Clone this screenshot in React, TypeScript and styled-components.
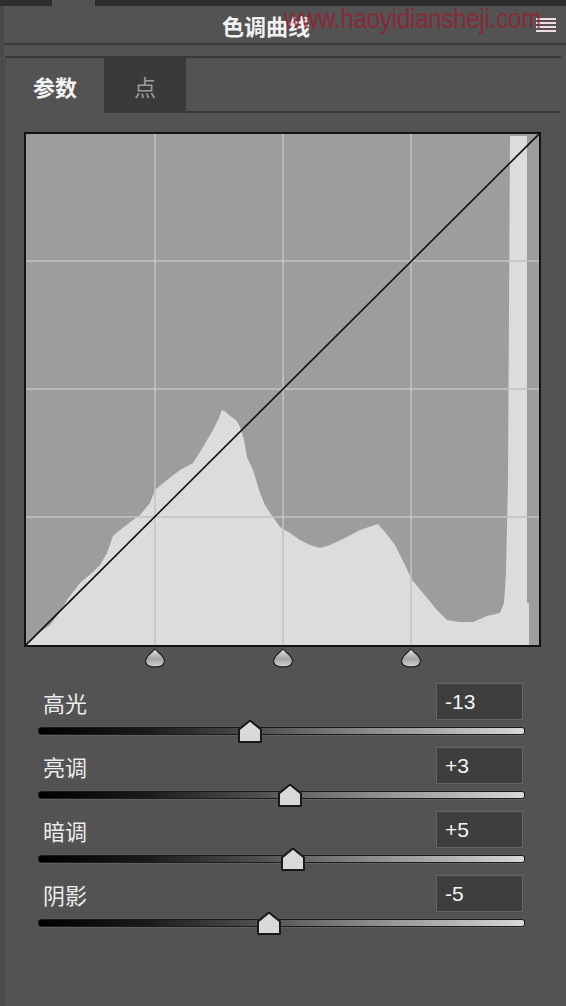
import React from 'react';
import styled, { createGlobalStyle } from 'styled-components';

const GlobalStyle = createGlobalStyle`
  html, body {
    margin: 0;
    padding: 0;
    background: #535353;
  }
  #root {
    width: 566px;
    height: 1006px;
  }
`;

const Panel = styled.div`
  position: relative;
  width: 566px;
  height: 1006px;
  display: flex;
  flex-direction: column;
  background: #535353;
  overflow: hidden;
  font-family: "Noto Sans CJK SC", "Noto Sans", sans-serif;
  color: #ececec;
`;

const TopStrip = styled.div`
  flex: none;
  height: 6px;
  display: flex;
  background: #2e2e2e;
`;

const TopTab = styled.div`
  width: 43px;
  margin-left: 52px;
  background: #525252;
`;

const Body = styled.div`
  flex: 1;
  display: flex;
  flex-direction: column;
  border-left: 4px solid #4a4a4a;
`;

const Header = styled.div`
  height: 37px;
  display: flex;
  align-items: center;
`;

const Title = styled.div`
  flex: 1;
  text-align: center;
  padding-right: 8px;
  font-size: 22px;
  font-weight: 700;
  color: #f2f2f2;
`;

const MenuIcon = styled.svg`
  width: 20px;
  height: 16px;
  margin-right: 10px;
`;

// the site watermark printed across the header of the screenshot
const Watermark = styled.div`
  position: absolute;
  top: 3px;
  left: 284px;
  font-family: "Liberation Sans", Arial, sans-serif;
  font-size: 24px;
  letter-spacing: -0.2px;
  transform: scaleY(1.12);
  transform-origin: left top;
  color: rgba(160, 22, 48, 0.72);
  pointer-events: none;
  white-space: nowrap;
`;

const Divider = styled.div`
  height: 2px;
  background: #393939;
`;

const Content = styled.div`
  flex: 1;
  display: flex;
  flex-direction: column;
  margin: 11px 5px 0 1px;
  border-top: 2px solid #393939;
  border-left: 1px solid #474747;
`;

const TabRow = styled.div`
  height: 55px;
  display: flex;
`;

const Tab = styled.div<{ active: boolean; w: number }>`
  width: ${p => p.w}px;
  display: flex;
  align-items: center;
  justify-content: center;
  font-size: 22px;
  font-weight: ${p => (p.active ? 700 : 400)};
  color: ${p => (p.active ? '#f4f4f4' : '#9c9c9c')};
  background: ${p => (p.active ? 'transparent' : '#3a3a3a')};
`;

const TabFill = styled.div`
  flex: 1;
  border-bottom: 2px solid #393939;
`;

const Graph = styled.div`
  width: 517px;
  height: 515px;
  margin: 19px 0 0 18px;
  box-sizing: border-box;
  border: 2px solid #121212;
  background: #9d9d9d;
  svg {
    display: block;
  }
`;

const Markers = styled.div`
  height: 20px;
  display: flex;
  gap: 106px;
  margin-top: 1px;
  padding-left: 138px;
`;

const Sliders = styled.div`
  display: flex;
  flex-direction: column;
  padding: 15px 36px 0 32px;
`;

const SliderRow = styled.div`
  height: 64px;
  display: flex;
  flex-direction: column;
`;

const RowHead = styled.div`
  height: 37px;
  display: flex;
  align-items: center;
  justify-content: space-between;
`;

const Label = styled.div`
  margin-left: 5px;
  font-size: 22px;
  color: #ececec;
`;

const ValueBox = styled.div`
  width: 87px;
  height: 37px;
  margin-right: 2px;
  box-sizing: border-box;
  display: flex;
  align-items: center;
  padding-left: 8px;
  border: 1px solid #666;
  background: #3e3e3e;
  font-family: "Liberation Sans", Arial, sans-serif;
  font-size: 21px;
  color: #f4f4f4;
`;

const TrackArea = styled.div`
  position: relative;
  height: 27px;
`;

const Track = styled.div`
  height: 8px;
  margin-top: 7px;
  box-sizing: border-box;
  border: 1px solid #1c1c1c;
  border-radius: 3px;
  background: linear-gradient(to right, #000 0%, #1a1a1a 22%, #4f4f4f 45%, #8a8a8a 68%, #d8d8d8 100%);
  box-shadow: 0 1px 0 #616161;
`;

const Thumb = styled.svg`
  position: absolute;
  top: -1px;
  width: 26px;
  height: 25px;
`;

const histogram = [
  [26, 645], [30, 640], [40, 632], [50, 625], [60, 612], [67, 600], [80, 583], [93, 572],
  [100, 565], [107, 553], [113, 536], [120, 530], [133, 520], [140, 515], [150, 503],
  [155, 490], [167, 480], [180, 470], [193, 463], [203, 447], [213, 430], [218, 420],
  [222, 410], [226, 412], [230, 416], [236, 420], [240, 427], [244, 440], [247, 457],
  [253, 470], [260, 493], [265, 505], [270, 513], [280, 527], [290, 533], [300, 540],
  [310, 545], [320, 548], [330, 545], [345, 538], [360, 530], [372, 526], [378, 524],
  [385, 532], [395, 545], [405, 565], [412, 580], [423, 593], [437, 610], [447, 620],
  [460, 622], [473, 622], [487, 616], [500, 613], [504, 603], [506, 573], [508, 480],
  [510, 136], [527, 136], [527, 603], [529, 603], [529, 645],
]
  .map(([x, y]) => `${x - 26},${y - 134}`)
  .join(' ');

const grid = [128, 256, 384];

const sliders = [
  { label: '高光', value: '-13', at: 250 },
  { label: '亮调', value: '+3', at: 290 },
  { label: '暗调', value: '+5', at: 293 },
  { label: '阴影', value: '-5', at: 269 },
];

function Droplet() {
  return (
    <svg width="22" height="20" viewBox="0 0 22 20">
      <defs>
        <linearGradient id="drop" x1="0" y1="0" x2="0" y2="1">
          <stop offset="0" stopColor="#e8e8e8" />
          <stop offset="0.55" stopColor="#a4a4a4" />
          <stop offset="1" stopColor="#d4d4d4" />
        </linearGradient>
      </defs>
      <path
        d="M11 1 C13 4 20.5 7.5 20.5 13 C20.5 17 16.5 19 11 19 C5.5 19 1.5 17 1.5 13 C1.5 7.5 9 4 11 1 Z"
        fill="url(#drop)"
        stroke="#262626"
        strokeWidth="1.3"
      />
    </svg>
  );
}

export default function App() {
  return (
    <Panel>
      <GlobalStyle />
      <TopStrip>
        <TopTab />
      </TopStrip>
      <Body>
        <Header>
          <Title>色调曲线</Title>
          <MenuIcon viewBox="0 0 20 16">
            {[1, 5, 9, 13].map(y => (
              <rect key={y} x="0" y={y} width="20" height="2" fill="#f1dde1" />
            ))}
          </MenuIcon>
        </Header>
        <Divider />
        <Content>
          <TabRow>
            <Tab active w={98}>参数</Tab>
            <Tab active={false} w={82}>点</Tab>
            <TabFill />
          </TabRow>
          <Graph>
            <svg width="513" height="511" viewBox="0 0 513 511">
              <polygon points={histogram} fill="#dcdcdc" />
              {grid.map(g => (
                <line key={`v${g}`} x1={g + 1} y1="0" x2={g + 1} y2="511" stroke="#c3c3c3" strokeWidth="1.5" />
              ))}
              {grid.map(g => (
                <line key={`h${g}`} x1="0" y1={g - 1} x2="513" y2={g - 1} stroke="#c3c3c3" strokeWidth="1.5" />
              ))}
              <line x1="0" y1="511" x2="513" y2="0" stroke="#111" strokeWidth="1.6" />
            </svg>
          </Graph>
          <Markers>
            <Droplet />
            <Droplet />
            <Droplet />
          </Markers>
          <Sliders>
            {sliders.map(s => (
              <SliderRow key={s.label}>
                <RowHead>
                  <Label>{s.label}</Label>
                  <ValueBox>{s.value}</ValueBox>
                </RowHead>
                <TrackArea>
                  <Track />
                  <Thumb viewBox="0 0 26 25" style={{ left: s.at - 38 - 13 }}>
                    <path
                      d="M2 23 V10.5 L13 1.5 L24 10.5 V23 Z"
                      fill="#d9d9d9"
                      stroke="#181818"
                      strokeWidth="2"
                      strokeLinejoin="round"
                    />
                  </Thumb>
                </TrackArea>
              </SliderRow>
            ))}
          </Sliders>
        </Content>
      </Body>
      <Watermark>www.haoyidiansheji.com</Watermark>
    </Panel>
  );
}
